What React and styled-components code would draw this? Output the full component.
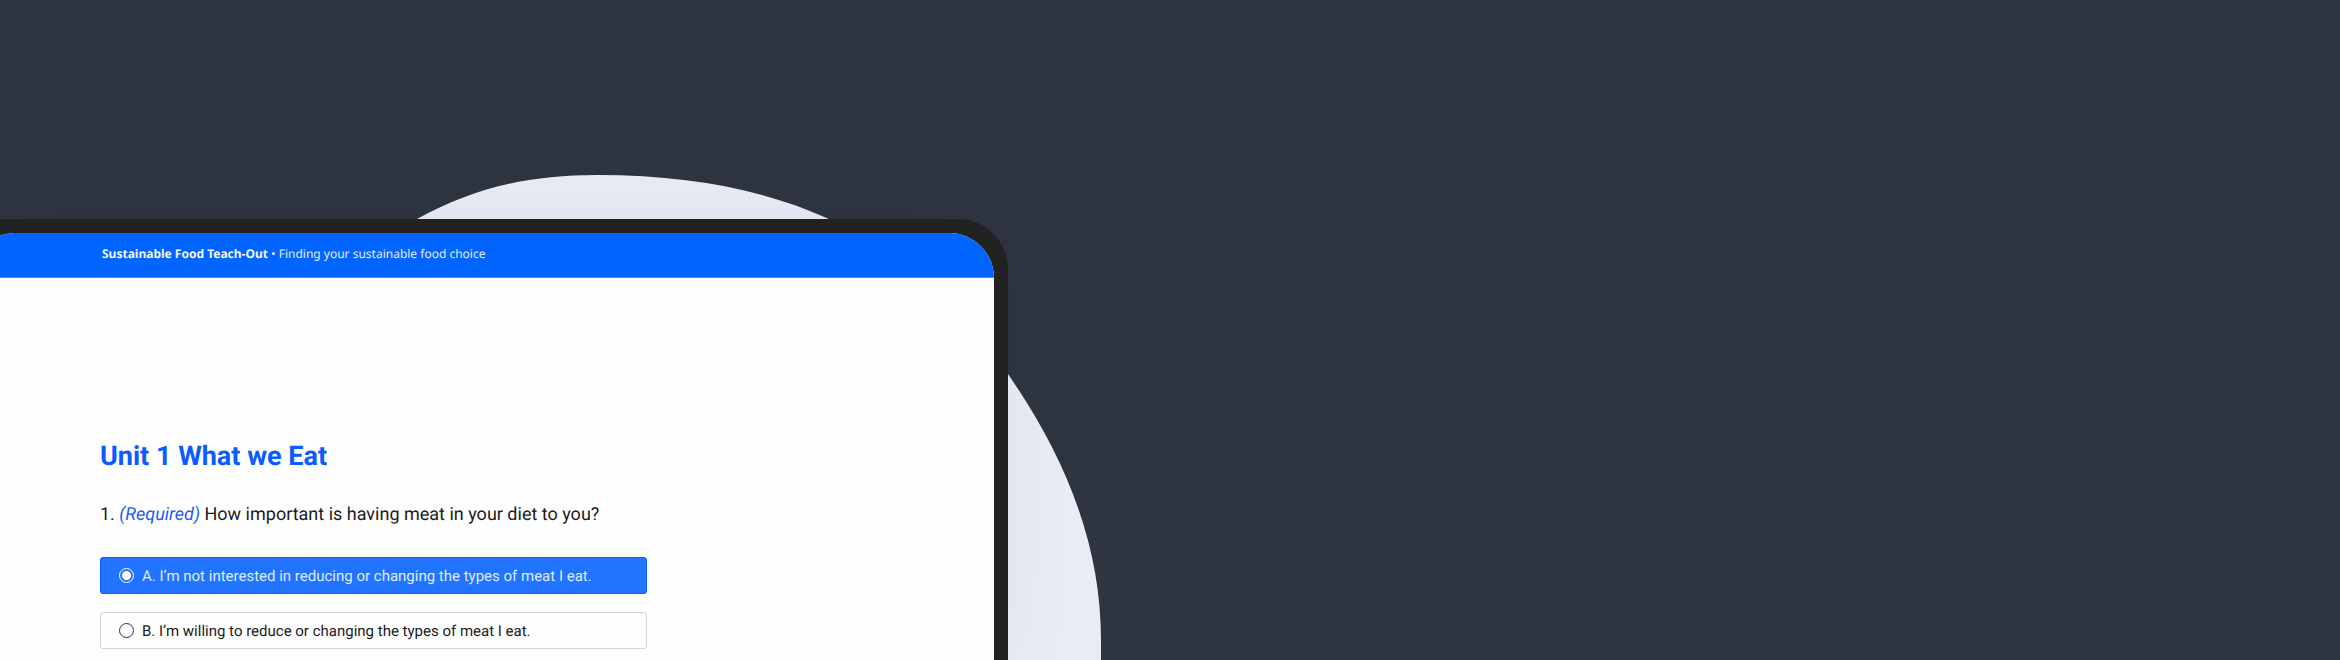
import React, { useState } from "react";
import styled, { createGlobalStyle } from "styled-components";

const GlobalStyle = createGlobalStyle`
  *, *::before, *::after { box-sizing: border-box; }
  body { margin: 0; background: #2e3540; }
`;

const Hero = styled.main`
  position: relative;
  display: grid;
  grid-template-columns: 1008fr 1332fr;
  min-height: 100vh;
  padding-top: 219px;
  overflow: hidden;
  background: #2e3540;
  font-family: Roboto, "Liberation Sans", sans-serif;
  text-rendering: geometricPrecision;
`;

const Blob = styled.svg`
  position: absolute;
  top: 0;
  left: 0;
  width: 1120px;
  height: 100%;
  fill: #e9ecf4;
`;

const Device = styled.section`
  position: relative;
  display: flex;
  margin-left: -44px;
  padding: 14px 14px 0;
  background: #222222;
  border-radius: 50px 50px 0 0;
  box-shadow: 0 0 80px rgba(40, 48, 64, 0.05);
`;

const Screen = styled.div`
  flex: 1;
  overflow: hidden;
  background: #fefefe;
  border-radius: 45px 45px 0 0;
`;

const CourseBar = styled.header`
  display: flex;
  align-items: center;
  height: 45px;
  padding: 0 132px 2px;
  border-bottom: 1px solid #4a90ff;
  background: #0064ff;
  color: #e3ecff;
  font: 12px/16px "Noto Sans", sans-serif;
  white-space: pre;
`;

const CourseName = styled.strong`
  color: #f4f7ff;
  font-weight: 700;
`;

const Survey = styled.form`
  width: 677px;
  max-width: 100%;
  padding: 160px 0 11px 130px;
`;

const UnitTitle = styled.h1`
  margin: 0 0 28px;
  color: #0a5cff;
  font-size: 27px;
  font-weight: 700;
  line-height: 36px;
`;

const Question = styled.fieldset`
  display: flex;
  flex-direction: column;
  gap: 18px;
  min-width: 0;
  margin: 0;
  padding: 0;
  border: 0;
`;

const Prompt = styled.legend`
  padding: 0 0 30px;
  color: #1b1b1b;
  font-size: 18px;
  line-height: 25px;
  white-space: nowrap;
`;

const Required = styled.em`
  color: #1f5cf0;
`;

const Option = styled.label`
  display: flex;
  align-items: center;
  gap: 8px;
  height: 37px;
  padding: 0 18px;
  border: 1px solid ${(p) => (p.$selected ? "#0a5cff" : "#d2d2d2")};
  border-radius: 3px;
  background: ${(p) => (p.$selected ? "#2274ff" : "#fefefe")};
  color: ${(p) => (p.$selected ? "#dfeaff" : "#1b1b1b")};
  font-size: 15px;
  line-height: 20px;
  white-space: nowrap;
`;

const Radio = styled.input`
  appearance: none;
  flex: none;
  width: 15px;
  height: 15px;
  margin: 0;
  border: 1px solid #333333;
  border-radius: 50%;

  &:checked {
    border-color: #ffffff;
    background: radial-gradient(circle, #ffffff 4px, transparent 5px);
  }
`;

const answers = [
  "A. I’m not interested in reducing or changing the types of meat I eat.",
  "B. I’m willing to reduce or changing the types of meat I eat.",
];

export default function App() {
  const [selected, setSelected] = useState(0);
  return (
    <>
      <GlobalStyle />
      <Hero>
        <Blob viewBox="0 0 1120 660" preserveAspectRatio="xMinYMin slice" aria-hidden="true">
          <path d="M417 219 C475 187 530 175 597 175 C690 175 765 190 829 219 C900 252 955 297 1008 374 C1070 464 1101 550 1101 640 V660 H417 Z" />
        </Blob>
        <Device>
          <Screen>
            <CourseBar>
              <CourseName>Sustainable Food Teach-Out</CourseName>
              <span> • Finding your sustainable food choice</span>
            </CourseBar>
            <Survey>
              <UnitTitle>Unit 1 What we Eat</UnitTitle>
              <Question>
                <Prompt>
                  1. <Required>(Required)</Required> How important is having meat in your diet to you?
                </Prompt>
                {answers.map((text, i) => (
                  <Option key={text} $selected={selected === i}>
                    <Radio type="radio" name="meat" checked={selected === i} onChange={() => setSelected(i)} />
                    {text}
                  </Option>
                ))}
              </Question>
            </Survey>
          </Screen>
        </Device>
      </Hero>
    </>
  );
}
